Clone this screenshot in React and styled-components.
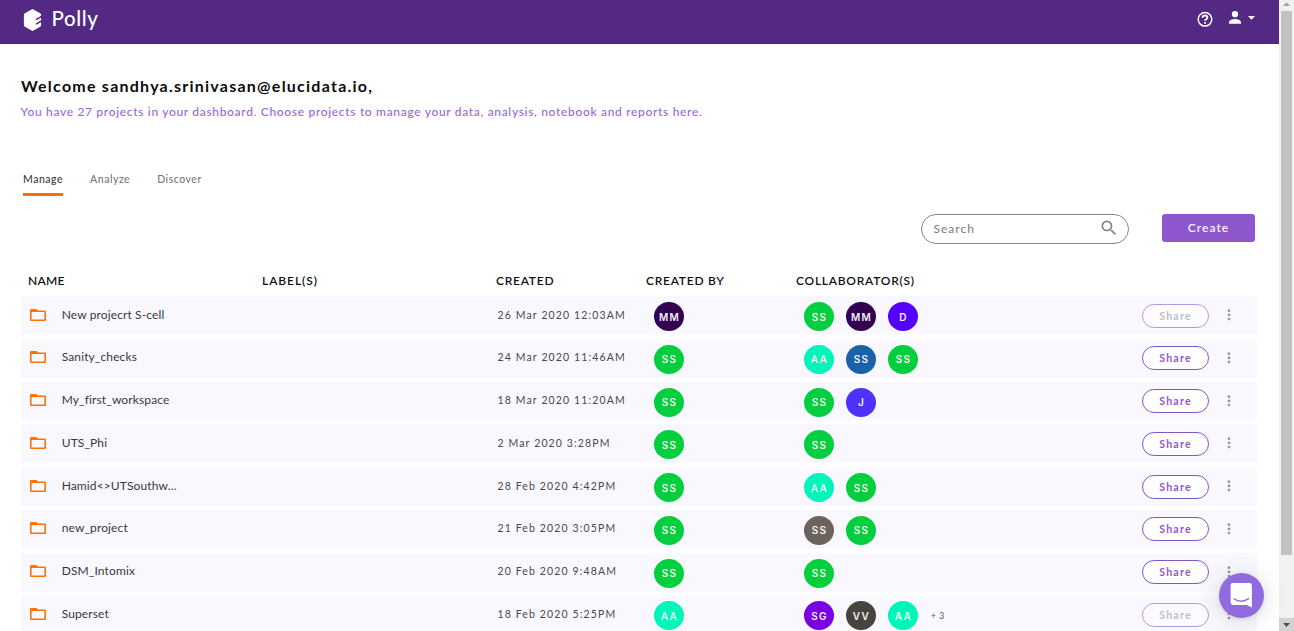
import React from "react";
import styled, { createGlobalStyle } from "styled-components";

const Global = createGlobalStyle`
  * { box-sizing: border-box; }
  html, body { margin: 0; height: 631px; overflow: hidden; background: #fff; }
  body, button, input { font-family: Lato, "Open Sans", sans-serif; }
`;

const Window = styled.div`
  display: flex;
  width: 1294px;
  height: 631px;
  overflow: hidden;
`;
const Page = styled.div`
  width: 1279px;
  height: 631px;
  overflow: hidden;
`;

const TopBar = styled.header`
  display: flex;
  justify-content: space-between;
  height: 44px;
  padding: 0 25px 0 23px;
  background: #542984;
  border-bottom: 1px solid #4c2878;
`;
const Brand = styled.div`
  display: flex;
  align-items: flex-start;
  gap: 9.5px;
  padding-top: 8px;
`;
const BrandName = styled.span`
  margin-top: -1px;
  color: #fff;
  font-size: 20.5px;
  font-weight: 500;
  line-height: 23px;
  letter-spacing: 0.6px;
`;
const Actions = styled.div`
  display: flex;
  align-items: flex-start;
  padding-top: 11px;
`;
const HelpIcon = styled.svg`
  margin-right: 16px;
`;
const CaretIcon = styled.svg`
  margin: 5px -1px 0 7px;
`;

const Main = styled.main`
  padding: 31px 22px 0 21px;
`;
const Welcome = styled.h1`
  margin: 0;
  color: #0c0c0c;
  font-size: 16px;
  font-weight: 700;
  line-height: 22px;
  letter-spacing: 1.24px;
`;
const Summary = styled.p`
  margin: 5px 0 0 -0.5px;
  color: #9767dc;
  font-size: 12px;
  font-weight: 500;
  line-height: 20px;
  letter-spacing: 0.675px;
`;
const Tabs = styled.nav`
  display: flex;
  gap: 27px;
  margin-top: 47px;
  padding-left: 2px;
`;
const Tab = styled.div`
  height: 27px;
  border-bottom: 3px solid ${(p) => (p.$active ? "#ff6e00" : "transparent")};
  color: ${(p) => (p.$active ? "#3c3c3c" : "#777")};
  font-size: 10.5px;
  font-weight: 500;
  line-height: 20px;
  letter-spacing: 0.52px;
`;

const Toolbar = styled.div`
  display: flex;
  justify-content: flex-end;
  align-items: flex-start;
  gap: 33px;
  margin-top: 18px;
  padding-right: 2px;
`;
const SearchBox = styled.label`
  display: flex;
  align-items: center;
  width: 208px;
  height: 30px;
  padding: 0 9px 2px 11.5px;
  border: 1px solid #858585;
  border-radius: 15px;
`;
const SearchInput = styled.input`
  flex: 1;
  min-width: 0;
  padding: 0;
  border: 0;
  outline: 0;
  background: none;
  font-size: 12px;
  letter-spacing: 1px;
  &::placeholder { color: #7b7b7b; opacity: 1; }
`;
const CreateButton = styled.button`
  width: 93px;
  height: 28px;
  padding: 0 0 2px;
  border: 0;
  border-radius: 3px;
  background: #8e57ce;
  color: #f8f2ff;
  font-size: 12px;
  font-weight: 600;
  letter-spacing: 1.05px;
`;

const HeadRow = styled.div`
  display: grid;
  grid-template-columns: 234px 234px 150px 150px 1fr;
  height: 52px;
  padding: 27px 0 0 7px;
`;
const HeadCell = styled.div`
  color: #111;
  font-size: 12px;
  font-weight: 600;
  line-height: 20px;
  letter-spacing: ${(p) => p.$tracking || 0.74}px;
`;
const Rows = styled.div`
  display: flex;
  flex-direction: column;
  gap: 3.75px;
`;
const Row = styled.div`
  display: grid;
  flex: none;
  grid-template-columns: 475px 158px 150px 1fr 67px 48px;
  align-items: start;
  height: 39px;
  background: #f9f8ff;
`;
const NameCell = styled.div`
  display: flex;
  gap: 15.5px;
  padding: 8.6px 0 0 9.2px;
`;
const FolderIcon = styled.svg`
  margin-top: 4px;
`;
const ProjectName = styled.span`
  color: #383838;
  font-size: 12px;
  line-height: 20px;
  letter-spacing: 0.12px;
`;
const DateCell = styled.div`
  padding: 8.5px 0 0 1.5px;
  color: #484848;
  font-size: 10.5px;
  line-height: 20px;
  letter-spacing: 1.13px;
`;
const People = styled.div`
  display: flex;
  align-items: center;
  gap: 12px;
  padding-top: 6px;
`;
const Avatar = styled.span`
  display: flex;
  align-items: center;
  justify-content: center;
  width: 30px;
  height: 29px;
  padding-left: 1px;
  border-radius: 50%;
  background: ${(p) => p.$color};
  color: #f2f2f2;
  font-family: Inter, sans-serif;
  font-size: 10px;
  font-weight: 600;
  letter-spacing: 1.3px;
`;
const More = styled.span`
  padding-left: 1px;
  color: #555;
  font-size: 8.5px;
  letter-spacing: 0.6px;
`;
const ShareButton = styled.button`
  height: 24px;
  margin-top: 7.6px;
  padding: 0;
  border: 1px solid #8455c4;
  border-radius: 12px;
  background: #fff;
  color: #8e57ce;
  font-size: 10.6px;
  font-weight: 700;
  letter-spacing: 1.2px;
  ${(p) => p.disabled && "border-color: #b799df; background: #fcfbff; color: #bfbfc4;"}
`;
const Kebab = styled.svg`
  margin: 13px 0 0 18px;
`;

const ChatButton = styled.div`
  position: fixed;
  left: 1219px;
  top: 573px;
  display: flex;
  align-items: center;
  justify-content: center;
  width: 45px;
  height: 45px;
  border-radius: 50%;
  background: #916ade;
  box-shadow: 0 1px 5px rgba(0, 0, 0, 0.1), 0 2px 24px rgba(0, 0, 0, 0.14);
`;

const Scrollbar = styled.div`
  display: flex;
  flex-direction: column;
  align-items: center;
  justify-content: space-between;
  width: 15px;
  height: 631px;
  background: #f1f1f1;
`;
const Thumb = styled.div`
  width: 11px;
  height: 544px;
  margin-bottom: 63px;
  background: #c1c1c1;
`;
const ArrowBox = styled.div`
  display: flex;
  justify-content: center;
  width: 15px;
  height: ${(p) => (p.$down ? 13 : 11)}px;
  background: ${(p) => (p.$down ? "#d2d2d2" : "transparent")};
`;

const GREEN = "#03ce3e";
const AQUA = "#00f6b9";
const PLUM = "#320052";

const HEADINGS = [
  ["NAME", 0.3],
  ["LABEL(S)", 0.94],
  ["CREATED"],
  ["CREATED BY"],
  ["COLLABORATOR(S)"],
];

const PROJECTS = [
  { name: "New projecrt S-cell", date: "26 Mar 2020 12:03AM", by: ["MM", PLUM], team: [["SS", GREEN], ["MM", PLUM], ["D", "#5500ff"]], locked: true },
  { name: "Sanity_checks", date: "24 Mar 2020 11:46AM", by: ["SS", GREEN], team: [["AA", AQUA], ["SS", "#1961a8"], ["SS", GREEN]] },
  { name: "My_first_workspace", date: "18 Mar 2020 11:20AM", by: ["SS", GREEN], team: [["SS", GREEN], ["J", "#4e32fb"]] },
  { name: "UTS_Phi", date: "2 Mar 2020 3:28PM", by: ["SS", GREEN], team: [["SS", GREEN]] },
  { name: "Hamid<>UTSouthw...", date: "28 Feb 2020 4:42PM", by: ["SS", GREEN], team: [["AA", AQUA], ["SS", GREEN]] },
  { name: "new_project", date: "21 Feb 2020 3:05PM", by: ["SS", GREEN], team: [["SS", "#6c635f"], ["SS", GREEN]] },
  { name: "DSM_Intomix", date: "20 Feb 2020 9:48AM", by: ["SS", GREEN], team: [["SS", GREEN]] },
  { name: "Superset", date: "18 Feb 2020 5:25PM", by: ["AA", AQUA], team: [["SG", "#7800e2"], ["VV", "#48443d"], ["AA", AQUA]], more: "+ 3", locked: true },
];

function ProjectRow({ name, date, by, team, more, locked }) {
  return (
    <Row>
      <NameCell>
        <FolderIcon width="16" height="13" viewBox="0 0 16 13">
          <path d="M1.2 0h5.3l1.4 1.400h6.900c.7 0 1.200.5 1.200 1.200v8.300c0 .7-.5 1.200-1.200 1.200H1.200c-.7 0-1.200-.5-1.200-1.200V1.200C0 .5.5 0 1.200 0zM1.600 3v7.500h12.800V3z" fill="#ff7208" fillRule="evenodd" />
        </FolderIcon>
        <ProjectName>{name}</ProjectName>
      </NameCell>
      <DateCell>{date}</DateCell>
      <People>
        <Avatar $color={by[1]}>{by[0]}</Avatar>
      </People>
      <People>
        {team.map(([initials, color], i) => (
          <Avatar key={i} $color={color}>{initials}</Avatar>
        ))}
        {more && <More>{more}</More>}
      </People>
      <ShareButton disabled={locked}>Share</ShareButton>
      <Kebab width="4" height="12" viewBox="0 0 4 12" fill="#98989e">
        <circle cx="2" cy="1.7" r="1.4" />
        <circle cx="2" cy="5.9" r="1.4" />
        <circle cx="2" cy="10.1" r="1.4" />
      </Kebab>
    </Row>
  );
}

export default function App() {
  return (
    <Window>
      <Global />
      <Page>
        <TopBar>
          <Brand>
            <svg width="19" height="24" viewBox="0 0 19 24">
              <path d="M9.500 1.500 17.600 6v2.100l-4.600 2.700v1.700L17.600 10v2.600L13 15.300V17l4.600-2.600V18L9.500 22.500 1.400 18V6z" fill="#fff" stroke="#fff" strokeWidth="1" strokeLinejoin="round" />
              <path d="M18.800 8.400 13 11.700M18.800 12.900 13 16.200" stroke="#542984" strokeWidth="1.400" />
            </svg>
            <BrandName>Polly</BrandName>
          </Brand>
          <Actions>
            <HelpIcon width="16" height="16" viewBox="0 0 16 16" fill="none" stroke="#fff">
              <circle cx="8" cy="8.300" r="6.800" strokeWidth="1.500" />
              <path d="M5.600 6.700c0-1.300 1-2.200 2.400-2.200s2.400.9 2.400 2.100c0 1.600-2.300 1.800-2.300 3.200" strokeWidth="1.800" />
              <path d="M7.200 11.800h1.800" strokeWidth="1.800" />
            </HelpIcon>
            <svg width="12" height="13" viewBox="0 0 12 13" fill="#fff">
              <circle cx="6" cy="3.200" r="3.100" />
              <path d="M0 12.800v-1.500C0 9.200 3.600 8 6 8s6 1.200 6 3.300v1.500z" />
            </svg>
            <CaretIcon width="7" height="4" viewBox="0 0 7 4"><path d="M0 0h7L3.500 3.700z" fill="#fff" /></CaretIcon>
          </Actions>
        </TopBar>
        <Main>
          <Welcome>Welcome sandhya.srinivasan@elucidata.io,</Welcome>
          <Summary>You have 27 projects in your dashboard. Choose projects to manage your data, analysis, notebook and reports here.</Summary>
          <Tabs>
            <Tab $active>Manage</Tab>
            <Tab>Analyze</Tab>
            <Tab>Discover</Tab>
          </Tabs>
          <Toolbar>
            <SearchBox>
              <SearchInput placeholder="Search" />
              <svg width="20" height="20" viewBox="0 0 24 24" fill="#858585">
                <path d="M15.5 14h-.79l-.28-.27A6.47 6.47 0 0 0 16 9.5 6.5 6.5 0 1 0 9.5 16c1.61 0 3.09-.59 4.23-1.57l.27.28v.79l5 4.99L20.49 19zm-6 0C7.01 14 5 11.99 5 9.5S7.01 5 9.5 5 14 7.01 14 9.5 11.99 14 9.5 14z" />
              </svg>
            </SearchBox>
            <CreateButton>Create</CreateButton>
          </Toolbar>
          <HeadRow>
            {HEADINGS.map(([label, tracking]) => (
              <HeadCell key={label} $tracking={tracking}>{label}</HeadCell>
            ))}
          </HeadRow>
          <Rows>
            {PROJECTS.map((p) => (
              <ProjectRow key={p.name} {...p} />
            ))}
          </Rows>
        </Main>
      </Page>
      <Scrollbar>
        <ArrowBox>
          <svg width="15" height="11" viewBox="0 0 15 11"><path d="M4 6 7.5 2.2 11 6z" fill="#a3a3a3" /></svg>
        </ArrowBox>
        <Thumb />
        <ArrowBox $down>
          <svg width="15" height="13" viewBox="0 0 15 13"><path d="M4 5h7L7.5 9z" fill="#505050" /></svg>
        </ArrowBox>
      </Scrollbar>
      <ChatButton>
        <svg width="23" height="25" viewBox="0 0 23 25">
          <path d="M3 0h16.5a2.4 2.4 0 0 1 2.4 2.4V24.5L17 22H3A2.4 2.4 0 0 1 .6 19.600V2.400A2.4 2.4 0 0 1 3 0z" fill="#fff" />
          <path d="M4 15.700q7.200 5 14.500 0" fill="none" stroke="#916ade" strokeWidth="1.4" strokeLinecap="round" />
        </svg>
      </ChatButton>
    </Window>
  );
}
